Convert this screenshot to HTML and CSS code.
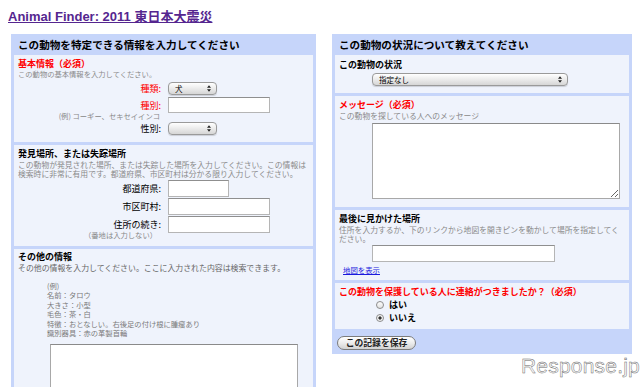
FILE: index.html
```html
<!DOCTYPE html>
<html lang="ja">
<head>
<meta charset="utf-8">
<title>Animal Finder</title>
<link rel="stylesheet" href="styles.css">
</head>
<body>
<div class="page">
  <h1 class="title"><a href="#">Animal Finder: 2011 東日本大震災</a></h1>
  <div class="columns">
    <div class="panel panel-left">
      <div class="panel-head">この動物を特定できる情報を入力してください</div>

      <div class="sec sec-basic">
        <div class="sec-title req">基本情報（必須）</div>
        <div class="desc desc-basic">この動物の基本情報を入力してください。</div>
        <div class="rows">
          <div class="row">
            <div class="lab req lab-sel">種類:</div>
            <span class="sel sel-small"><select><option>犬</option></select><svg class="arr" viewBox="0 0 6 10" width="4" height="7"><path d="M3 0L6 4H0Z M3 10L0 6H6Z" fill="#222"/></svg></span>
          </div>
          <div class="row">
            <div class="labcell"><div class="lab req lab-in">種別:</div><div class="hint">(例) コーギー、セキセイインコ</div></div>
            <input class="txt txt-long" type="text">
          </div>
          <div class="row">
            <div class="lab lab-sel">性別:</div>
            <span class="sel sel-small"><select><option></option></select><svg class="arr" viewBox="0 0 6 10" width="4" height="7"><path d="M3 0L6 4H0Z M3 10L0 6H6Z" fill="#222"/></svg></span>
          </div>
        </div>
      </div>

      <div class="sec sec-place">
        <div class="sec-title">発見場所、または失踪場所</div>
        <div class="desc">この動物が発見された場所、または失踪した場所を入力してください。この情報は検索時に非常に有用です。都道府県、市区町村は分かる限り入力してください。</div>
        <div class="rows rows-place">
          <div class="row">
            <div class="lab lab-txt">都道府県:</div>
            <input class="txt txt-short" type="text">
          </div>
          <div class="row">
            <div class="lab lab-txt">市区町村:</div>
            <input class="txt txt-long" type="text">
          </div>
          <div class="row">
            <div class="labcell"><div class="lab lab-txt">住所の続き:</div><div class="hint hint-addr">（番地は入力しない）</div></div>
            <input class="txt txt-long" type="text">
          </div>
        </div>
      </div>

      <div class="sec sec-other">
        <div class="sec-title">その他の情報</div>
        <div class="desc desc-dark">その他の情報を入力してください。ここに入力された内容は検索できます。</div>
        <div class="example">
          <div>(例)</div>
          <div>名前：タロウ</div>
          <div>大きさ：小型</div>
          <div>毛色：茶・白</div>
          <div>特徴：おとなしい。右後足の付け根に腫瘤あり</div>
          <div>識別器具：赤の革製首輪</div>
        </div>
        <textarea class="area area-other"></textarea>
      </div>
    </div>

    <div class="panel panel-right">
      <div class="panel-head">この動物の状況について教えてください</div>

      <div class="sec sec-status">
        <div class="sec-title">この動物の状況</div>
        <span class="sel sel-wide"><select><option>指定なし</option></select><svg class="arr" viewBox="0 0 6 10" width="4" height="7"><path d="M3 0L6 4H0Z M3 10L0 6H6Z" fill="#222"/></svg></span>
      </div>

      <div class="sec sec-msg">
        <div class="sec-title req">メッセージ（必須）</div>
        <div class="desc">この動物を探している人へのメッセージ</div>
        <textarea class="area area-msg"></textarea>
      </div>

      <div class="sec sec-seen">
        <div class="sec-title">最後に見かけた場所</div>
        <div class="desc">住所を入力するか、下のリンクから地図を開きピンを動かして場所を指定してください。</div>
        <input class="txt txt-seen" type="text">
        <a class="maplink" href="#">地図を表示</a>
      </div>

      <div class="sec sec-contact">
        <div class="sec-title req">この動物を保護している人に連絡がつきましたか？（必須）</div>
        <label class="radio"><input type="radio" name="c"><span>はい</span></label>
        <label class="radio"><input type="radio" name="c" checked><span>いいえ</span></label>
      </div>

      <div class="panel-foot">
        <button class="save" type="button">この記録を保存</button>
      </div>
    </div>
  </div>
  <div class="watermark">Response.jp</div>
</div>
</body>
</html>
```

FILE: styles.css
```css
html, body {
  margin: 0;
  padding: 0;
  overflow: hidden;
  background: #fff;
}
body {
  font-family: "Noto Sans CJK JP", "Liberation Sans", sans-serif;
  color: #000;
}
.page {
  position: relative;
  width: 640px;
  height: 387px;
  overflow: hidden;
}
.title {
  margin: 0;
  padding: 9px 0 0 8px;
  font-family: "Liberation Sans", "Noto Sans CJK JP", sans-serif;
  font-size: 13px;
  line-height: 16px;
  font-weight: bold;
}
.title a {
  color: #55268f;
  text-decoration: underline;
}
.columns {
  display: flex;
  align-items: flex-start;
  gap: 16px;
  padding: 9px 0 0 11px;
}
.panel {
  background: #c6d5fa;
  padding: 0 3px 0;
  display: flex;
  flex-direction: column;
  gap: 3px;
  box-sizing: border-box;
}
.panel-left {
  width: 305px;
  padding-bottom: 3px;
}
.panel-right {
  width: 300px;
}
.panel-head {
  height: 21px;
  line-height: 21px;
  padding-left: 4px;
  font-size: 10.6px;
  font-weight: bold;
  margin-bottom: -3px;
}
.sec {
  background: #eff3fc;
  padding: 3px 4px 7px;
  display: flex;
  flex-direction: column;
  align-items: flex-start;
}
.sec-title {
  font-size: 9px;
  line-height: 12px;
  font-weight: bold;
}
.req {
  color: #f00;
}
.desc {
  font-size: 7.8px;
  line-height: 9px;
  color: #8a8a8a;
}
.desc-basic {
  font-size: 7.3px;
}
.desc-dark {
  color: #666;
  line-height: 10px;
  font-size: 7.9px;
}
.rows {
  display: flex;
  flex-direction: column;
  gap: 2px;
  margin-top: 3px;
}
.rows-place {
  gap: 1px;
  margin-top: 2px;
}
.row {
  display: flex;
  align-items: flex-start;
  gap: 7px;
}
.lab {
  width: 143px;
  text-align: right;
  font-size: 9px;
}
.lab-sel {
  line-height: 13px;
}
.lab-in {
  padding-top: 3px;
  line-height: 12px;
}
.lab-txt {
  line-height: 17px;
}
.labcell {
  width: 143px;
  display: flex;
  flex-direction: column;
  align-items: flex-end;
}
.hint {
  font-size: 7.3px;
  line-height: 8px;
  color: #888;
  padding-right: 1px;
}
.hint-addr {
  margin-top: -2px;
  padding-right: 4px;
}
.sel {
  position: relative;
  display: block;
  height: 13px;
}
.sel select {
  -webkit-appearance: none;
  appearance: none;
  display: block;
  box-sizing: border-box;
  width: 100%;
  height: 13px;
  margin: 0;
  padding: 0 0 0 6px;
  border: 1px solid #9a9a9a;
  border-radius: 4px;
  background: linear-gradient(#ffffff, #e9e9e9 55%, #d6d6d6);
  box-shadow: 0 1px 1px rgba(0, 0, 0, 0.15);
  font-family: "Noto Sans CJK JP", sans-serif;
  font-size: 7.5px;
  line-height: 11px;
  color: #000;
}
.sel .arr {
  position: absolute;
  right: 6px;
  top: 3px;
}
.sel-small {
  width: 49px;
}
.sel-wide {
  width: 196px;
  margin: 2px 0 0 33px;
}
.txt {
  box-sizing: border-box;
  display: block;
  margin: 0;
  height: 17px;
  border: 1px solid #b5b5b5;
  border-top-color: #8f8f8f;
  background: #fff;
  padding: 0 2px;
}
.txt-long {
  width: 102px;
}
.sec-basic .txt-long {
  height: 16px;
}
.txt-short {
  width: 61px;
}
.txt-seen {
  width: 183px;
  margin: 2px 0 0 33px;
}
.area {
  box-sizing: border-box;
  display: block;
  margin: 0;
  border: 1px solid #a8a8a8;
  border-top-color: #8a8a8a;
  background: #fff;
}
.area-msg {
  width: 248px;
  height: 76px;
  margin: 3px 0 0 33px;
}
.sec-msg {
  padding-bottom: 8px;
}
.sec-other {
  padding-top: 2px;
}
.example {
  margin: 9px 0 0 29px;
  font-size: 7.3px;
  line-height: 9.4px;
  color: #7a7a7a;
}
.area-other {
  width: 248px;
  height: 70px;
  margin: 6px 0 0 32px;
}
.sec-status {
  padding-top: 4px;
  padding-bottom: 7px;
}
.maplink {
  margin: 3px 0 0 4px;
  font-size: 7.4px;
  line-height: 9px;
  color: #1a1add;
  text-decoration: underline;
}
.sec-seen {
  padding-bottom: 6px;
}
.sec-contact {
  padding-bottom: 5px;
}
.radio {
  display: flex;
  align-items: center;
  gap: 5px;
  margin-left: 37px;
  height: 13px;
  font-size: 9px;
  font-weight: bold;
}
.radio input {
  -webkit-appearance: none;
  appearance: none;
  box-sizing: border-box;
  margin: 0;
  width: 8px;
  height: 8px;
  border: 1px solid #8c8c8c;
  border-radius: 50%;
  background: linear-gradient(#fdfdfd, #e2e2e2);
}
.radio input:checked {
  background: radial-gradient(circle, #333 0 1.3px, #f4f4f4 1.9px);
}
.panel-foot {
  display: flex;
  padding: 7px 2px 4px;
  margin-top: -3px;
}
.save {
  display: block;
  box-sizing: border-box;
  height: 14px;
  width: 79px;
  padding: 0;
  margin: 0;
  border: 1px solid #7c7c7c;
  border-radius: 7px;
  background: linear-gradient(#ffffff, #ececec 50%, #d2d2d2);
  font-family: "Noto Sans CJK JP", sans-serif;
  font-size: 8.8px;
  font-weight: bold;
  line-height: 12px;
  color: #222;
}
.watermark {
  position: absolute;
  left: 521px;
  top: 355px;
  font-family: "Liberation Sans", sans-serif;
  font-size: 21px;
  line-height: 21px;
  letter-spacing: 0.2px;
  color: #fafafa;
  -webkit-text-stroke: 0.45px #666;
}
```
